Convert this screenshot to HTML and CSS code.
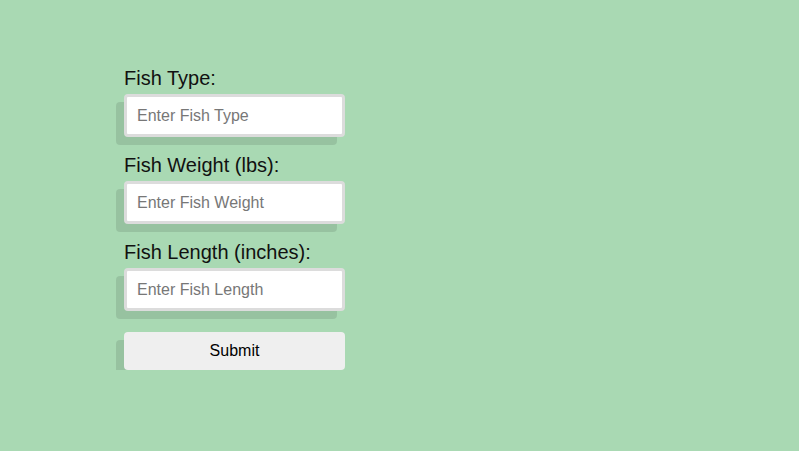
FILE: index.html
```html
<!DOCTYPE html>
<html lang="en">

<head>
    <meta charset="UTF-8">
    <meta name="viewport" content="width=device-width, initial-scale=1.0">
    <title>Fish Log</title>
    <link rel="stylesheet" href="styles.css">
</head>

<body>
    <form class="fish-form">
        <label for="fish-type">Fish Type:</label>
        <input type="text" id="fish-type" placeholder="Enter Fish Type">

        <label for="fish-weight">Fish Weight (lbs):</label>
        <input type="text" id="fish-weight" placeholder="Enter Fish Weight">

        <label for="fish-length">Fish Length (inches):</label>
        <input type="text" id="fish-length" placeholder="Enter Fish Length">

        <button type="submit">Submit</button>
    </form>
</body>

</html>
```

FILE: styles.css
```css
body {
    font-family: "Liberation Sans", Arial, sans-serif;
    margin: 0;
    padding: 66px 0 0 124px;
    background-color: #a9d9b3;
    color: #111;
}

.fish-form {
    display: flex;
    flex-direction: column;
    width: 221px;
}

.fish-form label {
    font-size: 20px;
    line-height: 24px;
    margin-bottom: 4px;
}

.fish-form input {
    box-sizing: border-box;
    height: 43px;
    width: 221px;
    padding: 0 10px;
    margin: 0 0 16px 0;
    font-family: inherit;
    font-size: 16px;
    border: 3px solid #dcdcdc;
    border-radius: 4px;
    background-color: #ffffff;
    box-shadow: -8px 8px 0 rgba(0, 0, 0, 0.1);
    outline: none;
}

.fish-form input::placeholder {
    color: #777;
}

.fish-form button {
    box-sizing: border-box;
    height: 38px;
    width: 221px;
    margin-top: 5px;
    font-family: inherit;
    font-size: 16px;
    color: #000;
    border: none;
    border-radius: 4px;
    background-color: #efefef;
    box-shadow: -8px 8px 0 rgba(0, 0, 0, 0.1);
    cursor: pointer;
}
```
